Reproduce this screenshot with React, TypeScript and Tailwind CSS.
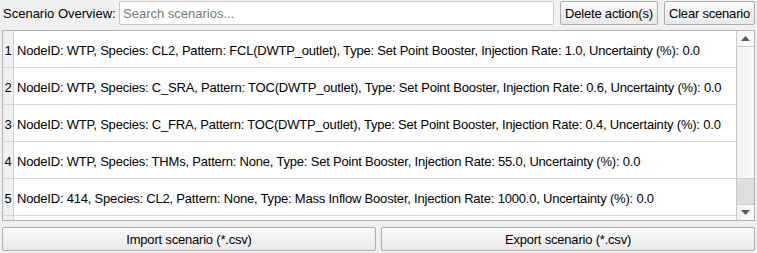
import React from 'react'

const rows = [
  'NodeID: WTP, Species: CL2, Pattern: FCL(DWTP_outlet), Type: Set Point Booster, Injection Rate: 1.0, Uncertainty (%): 0.0',
  'NodeID: WTP, Species: C_SRA, Pattern: TOC(DWTP_outlet), Type: Set Point Booster, Injection Rate: 0.6, Uncertainty (%): 0.0',
  'NodeID: WTP, Species: C_FRA, Pattern: TOC(DWTP_outlet), Type: Set Point Booster, Injection Rate: 0.4, Uncertainty (%): 0.0',
  'NodeID: WTP, Species: THMs, Pattern: None, Type: Set Point Booster, Injection Rate: 55.0, Uncertainty (%): 0.0',
  'NodeID: 414, Species: CL2, Pattern: None, Type: Mass Inflow Booster, Injection Rate: 1000.0, Uncertainty (%): 0.0',
]

const btn =
  'h-[24px] flex items-center justify-center border border-[#adadad] rounded-[2px] bg-gradient-to-b from-[#fbfbfb] to-[#e9e9e9] text-black tracking-[-0.2px]'

export default function App() {
  return (
    <div className="w-[757px] h-[253px] bg-[#f0f0f0] text-[13px] text-black overflow-hidden font-['Liberation_Sans',sans-serif] leading-none">
      {/* ── Top bar ─────────────────────────────── */}
      <div className="flex items-center h-[24px] mt-[1px]">
        <span className="pl-[3px] w-[119px] shrink-0">Scenario Overview:</span>
        <div className="w-[435px] h-[24px] bg-white border border-[#c5c5c5] rounded-[2px] flex items-center pl-[3px] text-[#7a7a7a]">
          Search scenarios...
        </div>
        <div className={`${btn} ml-[6px] w-[98px]`}>Delete action(s)</div>
        <div className={`${btn} ml-[6px] w-[91px]`}>Clear scenario</div>
      </div>

      {/* ── Table ───────────────────────────────── */}
      <div className="mt-[5px] ml-[2px] w-[753px] h-[191px] border border-[#b4b4b4] bg-white flex">
        <div className="flex-1 flex flex-col overflow-hidden border-r border-[#c8c8c8]">
          {[...rows, ''].map((r, i) => (
            <div key={i} className="flex h-[37px] shrink-0 border-b border-[#d4d4d4]">
              <div className="w-[11px] shrink-0 bg-[#f0f0f0] border-r border-[#d0d0d0] flex items-center justify-center pt-[2px]">
                {i < 5 ? i + 1 : ''}
              </div>
              <div className="flex items-center pl-[3px] pt-[2px] whitespace-nowrap tracking-[-0.2px]">{r}</div>
            </div>
          ))}
        </div>
        {/* scrollbar */}
        <div className="w-[17px] shrink-0 flex flex-col bg-gradient-to-r from-[#f2f2f2] to-[#fafafa]">
          <div className="h-[16px] flex items-center justify-center border-b border-[#cfcfcf] bg-gradient-to-r from-[#f5f5f5] to-[#fdfdfd]">
            <svg width="9" height="5" viewBox="0 0 9 5">
              <path d="M0 5 L4.5 0 L9 5 Z" fill="#5a5a5a" />
            </svg>
          </div>
          <div className="flex-1" />
          <div className="h-[27px] bg-[#dedede] border-y border-[#cfcfcf]" />
          <div className="h-[15px] flex items-center justify-center">
            <svg width="9" height="5" viewBox="0 0 9 5">
              <path d="M0 0 L9 0 L4.5 5 Z" fill="#5a5a5a" />
            </svg>
          </div>
        </div>
      </div>

      {/* ── Bottom buttons ──────────────────────── */}
      <div className="flex mt-[6px] ml-[2px] gap-[5px]">
        <div className={`${btn} w-[374px]`}>Import scenario (*.csv)</div>
        <div className={`${btn} w-[374px]`}>Export scenario (*.csv)</div>
      </div>
    </div>
  )
}
